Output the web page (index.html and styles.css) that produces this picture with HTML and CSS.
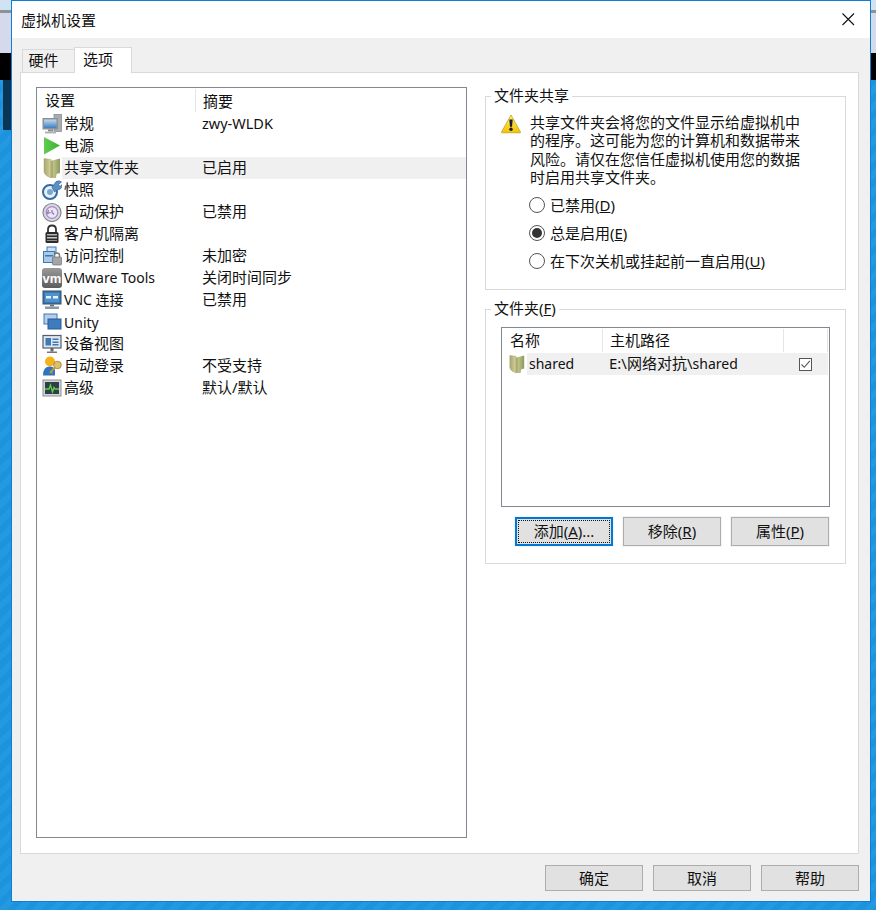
FILE: index.html
```html
<!DOCTYPE html>
<html lang="zh-CN">
<head>
<meta charset="utf-8">
<title>虚拟机设置</title>
<link rel="stylesheet" href="styles.css">
</head>
<body>
<svg class="defs" width="0" height="0" aria-hidden="true">
  <defs>
    <linearGradient id="folderFlap" x1="0" y1="0" x2="1" y2="0"><stop offset="0" stop-color="#a8a56f"/><stop offset="1" stop-color="#d8d2a0"/></linearGradient>
    <linearGradient id="folderFront" x1="0" y1="0" x2="1" y2="0"><stop offset="0" stop-color="#d4d4a0"/><stop offset="1" stop-color="#8d9a5a"/></linearGradient>
    <linearGradient id="screen" x1="0" y1="0" x2="0" y2="1"><stop offset="0" stop-color="#c4d9ec"/><stop offset="1" stop-color="#3f7fc0"/></linearGradient>
    <linearGradient id="play" x1="0" y1="0" x2="1" y2="0"><stop offset="0" stop-color="#62cb52"/><stop offset="1" stop-color="#39b335"/></linearGradient>
    <linearGradient id="warn" x1="0" y1="0" x2="0" y2="1"><stop offset="0" stop-color="#fff36a"/><stop offset="1" stop-color="#f2c200"/></linearGradient>
    <linearGradient id="vmBg" x1="0" y1="0" x2="0" y2="1"><stop offset="0" stop-color="#9a9a9a"/><stop offset="1" stop-color="#5c5c5c"/></linearGradient>
    <symbol id="folder" viewBox="0 0 20 20">
      <path d="M2 .5 L9 1.500 L9 20 L5 18 Q2.500 16.500 2 14 Z" fill="url(#folderFlap)" stroke="#a5a470" stroke-width=".5"/>
      <path d="M8.500 3 L18 .5 L18 15 L14.500 16 L14 20 L8.500 20 Z" fill="url(#folderFront)"/>
      <path d="M8.500 3 L11 2.400 L11 19.500 L8.500 20 Z" fill="#a9ae70"/>
    </symbol>
  </defs>
</svg>
<div class="desktop">
  <section class="window">
    <header class="titlebar">
      <h1 class="title">虚拟机设置</h1>
      <svg class="close" width="14" height="14" viewBox="0 0 14 14"><path d="M1.500 1.500 L13 13 M13 1.500 L1.500 13" stroke="#111" stroke-width="1.100" fill="none"/></svg>
    </header>
    <div class="body">
      <nav class="tabs">
        <span class="tab">硬件</span>
        <span class="tab tab-active">选项</span>
      </nav>
      <div class="panel">
        <div class="list settings">
          <div class="list-head">
            <span class="col-name">设置</span>
            <span class="col-sum">摘要</span>
          </div>
          <div class="row">
            <svg class="ico" viewBox="0 0 20 20"><rect x="12" y="0.500" width="7.500" height="17" fill="#a9adb2" stroke="#7f8489" stroke-width=".7"/><rect x="0.500" y="4" width="15.500" height="11.500" fill="#8a9299"/><rect x="2" y="5.500" width="12.500" height="8.500" fill="url(#screen)"/><rect x="6" y="15.500" width="5" height="2" fill="#888"/><rect x="3" y="17.500" width="11" height="2" fill="#b0b3b6"/></svg>
            <span class="name">常规</span><span class="sum sum-latin">zwy-WLDK</span>
          </div>
          <div class="row">
            <svg class="ico" viewBox="0 0 20 20"><path d="M2 1 L18 9.500 L2 18.500 Z" fill="url(#play)"/></svg>
            <span class="name">电源</span><span class="sum"></span>
          </div>
          <div class="row row-sel">
            <svg class="ico"><use href="#folder"/></svg>
            <span class="name">共享文件夹</span><span class="sum">已启用</span>
          </div>
          <div class="row">
            <svg class="ico" viewBox="0 0 20 20"><circle cx="8" cy="12" r="7" fill="#e8f0f8" stroke="#2f6da8" stroke-width="2"/><circle cx="8" cy="12" r="3" fill="#7aa6d0"/><path d="M10 7.500 L14 1.500 Q17.500 0 19.500 2 L16.500 4.500 L18 6.500 L20 4.500 Q20 9.500 15.500 10 L12.500 12 Z" fill="#5b8fc2" stroke="#2f5f90" stroke-width=".6"/></svg>
            <span class="name">快照</span><span class="sum"></span>
          </div>
          <div class="row">
            <svg class="ico" viewBox="0 0 20 20"><circle cx="10" cy="10.500" r="9" fill="#d8d8e2" stroke="#85858f" stroke-width="1.200"/><circle cx="10" cy="10.500" r="5.800" fill="#ece6f2" stroke="#a78cc8" stroke-width="1.300"/><path d="M6.500 8 L5.500 11.500 L8.500 10.500 M10 8 V10.500 L12 12.500" stroke="#8a6bb5" stroke-width="1.100" fill="none"/></svg>
            <span class="name">自动保护</span><span class="sum">已禁用</span>
          </div>
          <div class="row">
            <svg class="ico" viewBox="0 0 20 20"><path d="M6 9 V5.500 Q6 1.500 10 1.500 Q14 1.500 14 5.500 V9" fill="none" stroke="#333" stroke-width="1.800"/><rect x="3.500" y="8" width="13" height="11" rx="1.500" fill="#2b2b2b"/><rect x="5" y="10" width="10" height="1.500" fill="#b5b5b5"/><rect x="5" y="13" width="10" height="1.500" fill="#c9c9c9"/><rect x="5" y="16" width="10" height="1" fill="#8e8e8e"/></svg>
            <span class="name">客户机隔离</span><span class="sum"></span>
          </div>
          <div class="row">
            <svg class="ico" viewBox="0 0 20 20"><rect x="5" y="1" width="9" height="6" fill="#cfe0f1" stroke="#3e78b5" stroke-width="1"/><rect x="1.500" y="5.500" width="11" height="11" fill="#a9c9e8" stroke="#3e78b5" stroke-width="1"/><rect x="3" y="9" width="8" height="1.500" fill="#3e78b5"/><path d="M12.500 11 V9.500 Q12.500 7 15 7 Q17.500 7 17.500 9.500 V11" fill="none" stroke="#77797c" stroke-width="1.400"/><rect x="10.500" y="11" width="9" height="8" rx="1" fill="#a3a5a7" stroke="#6f7275" stroke-width=".7"/></svg>
            <span class="name">访问控制</span><span class="sum">未加密</span>
          </div>
          <div class="row">
            <span class="ico ico-vm">vm</span>
            <span class="name name-tight">VMware Tools</span><span class="sum">关闭时间同步</span>
          </div>
          <div class="row">
            <svg class="ico" viewBox="0 0 20 20"><rect x="1" y="1" width="18" height="13" fill="#3a78b4" stroke="#3d4d5c" stroke-width="1"/><rect x="3" y="3" width="14" height="9" fill="#4e92d2"/><rect x="4" y="6" width="5" height="2.500" fill="#e8f2fb"/><rect x="11" y="6" width="5" height="2.500" fill="#e8f2fb"/><rect x="8" y="14.500" width="4" height="2" fill="#66727d"/><rect x="3" y="16.500" width="14" height="2.500" fill="#8c98a3"/></svg>
            <span class="name name-tight">VNC 连接</span><span class="sum">已禁用</span>
          </div>
          <div class="row">
            <svg class="ico" viewBox="0 0 20 20"><rect x="2" y="2" width="13" height="10" fill="#b6cfe9" stroke="#3e78b5" stroke-width="1"/><rect x="6" y="7" width="13" height="10" fill="#3e7cc0" stroke="#2a5c96" stroke-width="1"/></svg>
            <span class="name name-tight name-low">Unity</span><span class="sum"></span>
          </div>
          <div class="row">
            <svg class="ico" viewBox="0 0 20 20"><rect x="1" y="1.500" width="18" height="12.500" fill="#dfe6ee" stroke="#555e68" stroke-width="1.200"/><rect x="3.500" y="4" width="5.500" height="7.500" fill="#3e78b5"/><rect x="10.500" y="4.500" width="6" height="1.500" fill="#3e78b5"/><rect x="10.500" y="7.500" width="6" height="1.500" fill="#3e78b5"/><rect x="10.500" y="10" width="6" height="1.500" fill="#3e78b5"/><rect x="8.500" y="14" width="3" height="3.500" fill="#666"/><rect x="5" y="17.500" width="10" height="1.500" fill="#777"/></svg>
            <span class="name">设备视图</span><span class="sum"></span>
          </div>
          <div class="row">
            <svg class="ico" viewBox="0 0 20 20"><circle cx="8" cy="5.500" r="5" fill="#f5b21b"/><path d="M1 19.500 Q1 10.500 8 10.500 Q11.500 10.500 13 13.500 L13 19.500 Z" fill="#2f74c0"/><circle cx="15.500" cy="9" r="3.800" fill="#dcc06e" stroke="#9c7f2f" stroke-width=".8"/><path d="M13 11.500 L8.500 16 L10.500 17" fill="none" stroke="#b8983f" stroke-width="1.800"/></svg>
            <span class="name">自动登录</span><span class="sum">不受支持</span>
          </div>
          <div class="row">
            <svg class="ico" viewBox="0 0 20 20"><rect x="1" y="2" width="18" height="16" fill="#d0d5d8" stroke="#8b9095" stroke-width="1"/><rect x="3" y="4" width="14" height="12" fill="#2f3f45"/><path d="M3 11 H7 L8.500 7 L10.500 14 L12 9.500 L13 11 H17" fill="none" stroke="#5fd04a" stroke-width="1.300"/></svg>
            <span class="name">高级</span><span class="sum">默认/默认</span>
          </div>
        </div>
        <div class="side">
          <fieldset class="group group-share">
            <legend class="legend">文件夹共享</legend>
            <div class="notice">
              <svg class="warn" width="20" height="20" viewBox="0 0 20 20"><path d="M10 1 L19.500 18 Q19.700 18.800 19 18.800 H1 Q.3 18.800 .5 18 Z" fill="url(#warn)" stroke="#b89b1a" stroke-width=".7"/><path d="M8.300 5.500 H11.700 L11 12.800 H9 Z" fill="#1c1c3a"/><circle cx="10" cy="15.300" r="1.700" fill="#1c1c3a"/></svg>
              <p class="notice-text">共享文件夹会将您的文件显示给虚拟机中<br>的程序。这可能为您的计算机和数据带来<br>风险。请仅在您信任虚拟机使用您的数据<br>时启用共享文件夹。</p>
            </div>
            <div class="radios">
              <div class="radio-row"><span class="radio"></span><span>已禁用(<u>D</u>)</span></div>
              <div class="radio-row"><span class="radio radio-on"></span><span>总是启用(<u>E</u>)</span></div>
              <div class="radio-row"><span class="radio"></span><span>在下次关机或挂起前一直启用(<u>U</u>)</span></div>
            </div>
          </fieldset>
          <fieldset class="group group-folders">
            <legend class="legend">文件夹(<u>F</u>)</legend>
            <div class="list folders">
              <div class="list-head">
                <span class="fcol-name">名称</span>
                <span class="fcol-path">主机路径</span>
                <span class="fcol-check"></span>
              </div>
              <div class="frow">
                <svg class="fico"><use href="#folder"/></svg>
                <div class="frow-sel">
                  <span class="fname">shared</span>
                  <span class="fpath">E:\网络对抗\<span class="latin">shared</span></span>
                  <span class="check"><svg width="11" height="11" viewBox="0 0 11 11"><path d="M1.500 5.500 L4.300 8.300 L9.800 1.800" fill="none" stroke="#555" stroke-width="1.100"/></svg></span>
                </div>
              </div>
            </div>
            <div class="group-buttons">
              <button class="btn btn-focus" type="button"><span class="focus-in">添加(<u>A</u>)...</span></button>
              <button class="btn btn-group" type="button">移除(<u>R</u>)</button>
              <button class="btn btn-group" type="button">属性(<u>P</u>)</button>
            </div>
          </fieldset>
        </div>
      </div>
      <footer class="footer">
        <button class="btn" type="button">确定</button>
        <button class="btn" type="button">取消</button>
        <button class="btn" type="button">帮助</button>
      </footer>
    </div>
  </section>
</div>
</body>
</html>
```
FILE: styles.css
```css
* { box-sizing: border-box; }
html, body { margin: 0; padding: 0; }
body {
  width: 876px;
  height: 910px;
  overflow: hidden;
  font-family: "Noto Sans", "Noto Sans CJK SC", sans-serif;
  font-size: 15px;
  color: #111;
}
.defs { position: absolute; }
.desktop {
  width: 876px;
  height: 910px;
  padding-left: 11px;
  background:
    linear-gradient(to bottom, #cfe3f2 0 10px, #8d9297 10px 13px, #d5d9ec 13px 53px, #000 53px 80px, transparent 80px) no-repeat,
    linear-gradient(to right, transparent 0 3px, #0b3554 3px 11px, transparent 11px) 0 80px / 100% 50px no-repeat,
    repeating-linear-gradient(135deg, #1c93dd 0 6px, #2499e1 6px 12px);
}
.window {
  width: 860px;
  height: 902px;
  border: 1px solid #0f7fd6;
  display: flex;
  flex-direction: column;
  background: #f0f0f0;
}
.titlebar {
  height: 37px;
  flex: none;
  background: #fff;
  display: flex;
  align-items: center;
  justify-content: space-between;
  padding: 0 15px 1px 9px;
}
.title { margin: 0; font-size: 15px; font-weight: 400; color: #111; }
.close { display: block; }
.body { flex: 1; display: flex; flex-direction: column; padding: 0 11px 0 8px; min-height: 0; }
.tabs { height: 34px; flex: none; display: flex; align-items: flex-end; padding-left: 2px; position: relative; z-index: 1; }
.tab {
  width: 53px;
  height: 23px;
  border: 1px solid #d9d9d9;
  border-bottom: 0;
  background: #f0f0f0;
  display: flex;
  align-items: center;
  justify-content: center;
  padding: 0 10px 3px 0;
}
.tab-active {
  width: 58px;
  height: 26px;
  margin-left: -1px;
  margin-bottom: -1px;
  background: #fff;
  border-width: 1px 1px 0;
  padding-bottom: 4px;
}
.panel {
  width: 839px;
  height: 782px;
  flex: none;
  border: 1px solid #d9d9d9;
  background: #fff;
  padding: 14px 12px 14px 15px;
  display: flex;
}
.list { border: 1px solid #828790; background: #fff; }
.settings { width: 431px; height: 751px; flex: none; }
.list-head { height: 25px; display: flex; align-items: center; }
.col-name { width: 159px; height: 23px; padding-left: 8px; line-height: 23px; border-right: 1px solid #e5e5e5; }
.col-sum { padding-left: 7px; }
.row { height: 22px; display: flex; align-items: center; padding-left: 5px; white-space: nowrap; }
.row-sel .name, .row-sel .sum { background: #f0f0f0; }
.ico { width: 20px; height: 20px; flex: none; display: block; }
.ico-vm {
  background: linear-gradient(#9a9a9a, #5c5c5c);
  border-radius: 3px;
  color: #fff;
  font: 700 13px/21px "Liberation Sans", sans-serif;
  text-align: center;
}
.name { width: 140px; height: 22px; line-height: 20px; padding-left: 2px; flex: none; }
.name-tight { padding-left: 2px; font-size: 14px; line-height: 22px; }
.name-low { line-height: 23px; }
.sum { flex: 1; height: 22px; line-height: 20px; padding-left: 0; }
.sum-latin { font-size: 14.500px; }
.latin { font-size: 14px; }
.side { flex: 1; margin-left: 18px; margin-top: -1px; min-width: 0; }
.group { margin: 0; padding: 0; min-width: 0; width: 361px; border: 1px solid #d9d9d9; display: block; }
.legend { margin-left: -10px; padding: 0 3px; height: 20px; line-height: 18px; }
.group-share { height: 204px; margin-bottom: 9px; padding: 8px 0 0 15px; }
.notice { display: flex; }
.warn { display: block; flex: none; margin-top: 0; }
.notice-text { margin: -1px 0 0 9px; line-height: 18.400px; white-space: nowrap; }
.radios { margin-top: 4px; }
.radio-row { height: 28px; display: flex; align-items: center; padding-left: 28px; gap: 5px; white-space: nowrap; }
.radio { width: 16px; height: 16px; border: 1px solid #555; border-radius: 50%; background: #fff; flex: none; position: relative; }
.radio-on::after {
  content: "";
  position: absolute;
  left: 2px;
  top: 2px;
  width: 10px;
  height: 10px;
  border-radius: 50%;
  background: #333;
}
.group-folders { height: 265px; padding: 8px 0 0 15px; }
.folders { width: 329px; height: 180px; }
.fcol-name { width: 101px; height: 23px; padding-left: 8px; line-height: 23px; border-right: 1px solid #e5e5e5; flex: none; }
.fcol-path { width: 181px; height: 23px; padding-left: 7px; line-height: 23px; border-right: 1px solid #e5e5e5; flex: none; }
.fcol-check { width: 44px; height: 23px; border-right: 1px solid #e5e5e5; flex: none; }
.frow { height: 22px; display: flex; align-items: center; padding-left: 6px; }
.fico { width: 18px; height: 20px; flex: none; display: block; }
.frow-sel { width: 301px; height: 22px; margin-left: 1px; background: #f0f0f0; display: flex; align-items: center; flex: none; white-space: nowrap; line-height: 20px; }
.fname { width: 82px; padding: 0 0 1px 2px; flex: none; font-size: 14px; }
.fpath { width: 190px; padding-bottom: 1px; flex: none; }
.check { width: 13px; height: 13px; border: 1px solid #555; background: #fff; display: flex; align-items: center; justify-content: center; flex: none; }
.group-buttons { display: flex; gap: 10px; margin: 10px 0 0 14px; }
.btn {
  width: 98px;
  height: 26px;
  padding: 0 0 2px;
  border: 1px solid #adadad;
  background: #e1e1e1;
  font: inherit;
  color: #111;
  display: flex;
  align-items: center;
  justify-content: center;
}
.btn-group { height: 29px; box-shadow: 0 0 0 1px #f3f3f3; }
.btn-focus { height: 29px; border: 2px solid #0078d7; padding: 1px; box-shadow: 0 0 0 1px #f3f3f3; }
.focus-in { width: 100%; height: 100%; border: 1px dotted #111; display: flex; align-items: center; justify-content: center; padding-bottom: 2px; }
.footer { flex: 1; display: flex; justify-content: flex-end; gap: 10px; padding-top: 11px; }
```
